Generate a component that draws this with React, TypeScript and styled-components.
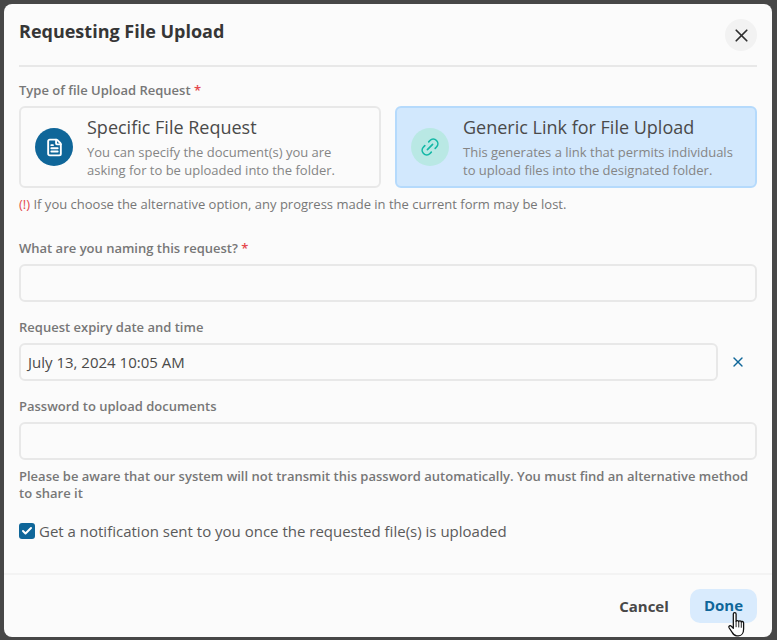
import React from 'react';
import styled, { createGlobalStyle } from 'styled-components';
import { FileText, Link2, X, Check } from 'lucide-react';

const GlobalStyle = createGlobalStyle`
  html, body {
    margin: 0;
    padding: 0;
    height: 640px;
    overflow: hidden;
    background: #474747;
    font-family: "Open Sans", "Liberation Sans", sans-serif;
  }
  * { box-sizing: border-box; }
`;

const Modal = styled.div`
  position: relative;
  width: 768px;
  height: 633px;
  margin: 4px 0 0 4px;
  background: #fbfbfb;
  border-radius: 8px;
  display: flex;
  flex-direction: column;
`;

const Body = styled.div`
  flex: 1;
  padding: 0 15px;
`;

const Header = styled.div`
  height: 63px;
  padding-top: 15px;
  border-bottom: 2px solid #e8e8e8;
  display: flex;
  justify-content: space-between;
  align-items: flex-start;
`;

const Title = styled.h2`
  margin: 0;
  font-size: 18px;
  line-height: 24px;
  font-weight: 700;
  color: #363636;
`;

const CloseButton = styled.button`
  width: 32px;
  height: 32px;
  border: none;
  border-radius: 50%;
  background: #f2f2f2;
  color: #2f2f2f;
  display: flex;
  align-items: center;
  justify-content: center;
  padding: 0;
`;

const Label = styled.div<{ $top: number }>`
  margin-top: ${({ $top }) => $top}px;
  font-size: 13px;
  line-height: 18px;
  font-weight: 600;
  color: #777777;
  margin-bottom: 7px;
`;

const Required = styled.span`
  color: #e5484d;
`;

const Cards = styled.div`
  display: grid;
  grid-template-columns: 362px 362px;
  gap: 14px;
`;

const Card = styled.div<{ $active?: boolean }>`
  height: 82px;
  border: 2px solid ${({ $active }) => ($active ? '#b5dafc' : '#e8e8e8')};
  background: ${({ $active }) => ($active ? '#d2e8fd' : 'transparent')};
  border-radius: 6px;
  display: flex;
  align-items: center;
  padding: 0 14px;
  gap: 14px;
`;

const IconCircle = styled.div<{ $active?: boolean }>`
  width: 38px;
  height: 38px;
  flex: none;
  border-radius: 50%;
  background: ${({ $active }) => ($active ? '#b9e8e4' : '#0f6699')};
  color: ${({ $active }) => ($active ? '#14b8a6' : '#ffffff')};
  display: flex;
  align-items: center;
  justify-content: center;
`;

const CardTitle = styled.div`
  font-size: 18px;
  line-height: 24px;
  color: #4a4a4a;
  margin-bottom: 4px;
`;

const CardText = styled.div`
  font-size: 13px;
  line-height: 18px;
  color: #858585;
`;

const Warning = styled.div`
  margin-top: 7px;
  font-size: 13px;
  line-height: 18px;
  color: #777777;
`;

const Bang = styled.span`
  color: #e5484d;
`;

const Field = styled.div<{ $width?: number }>`
  height: 38px;
  width: ${({ $width }) => ($width ? `${$width}px` : '100%')};
  border: 2px solid #e8e8e8;
  border-radius: 6px;
  padding: 0 7px;
  display: flex;
  align-items: center;
  font-size: 15px;
  color: #4a4a4a;
`;

const FieldRow = styled.div`
  display: flex;
  align-items: center;
`;

const ClearIcon = styled.div`
  margin-left: 12px;
  color: #0f6699;
  display: flex;
`;

const Note = styled.div`
  margin-top: 8px;
  font-size: 13px;
  line-height: 17px;
  font-weight: 600;
  color: #777777;
`;

const CheckRow = styled.div`
  margin-top: 19px;
  display: flex;
  align-items: center;
  gap: 4px;
  font-size: 15px;
  line-height: 20px;
  color: #5a5a5a;
`;

const CheckBox = styled.div`
  width: 16px;
  height: 16px;
  border-radius: 3px;
  background: #0f6699;
  color: #fff;
  display: flex;
  align-items: center;
  justify-content: center;
`;

const Footer = styled.div`
  height: 64px;
  border-top: 2px solid #f3f3f3;
  padding: 14px 15px 0 0;
  display: flex;
  justify-content: flex-end;
  align-items: flex-start;
`;

const CancelButton = styled.button`
  height: 34px;
  width: 68px;
  margin-right: 12px;
  border: none;
  background: transparent;
  font: 700 15px/32px "Open Sans", sans-serif;
  color: #484848;
  padding: 0;
`;

const DoneButton = styled.button`
  height: 34px;
  width: 67px;
  border: none;
  border-radius: 10px;
  background: #d9ebfd;
  font: 700 15px/32px "Open Sans", sans-serif;
  color: #0f6699;
  padding: 0 0 2px;
`;

const Cursor = styled.svg`
  position: absolute;
  left: 723px;
  top: 607px;
`;

const App: React.FC = () => {
  return (
    <>
      <GlobalStyle />
      <Modal>
        <Body>
          <Header>
            <Title>Requesting File Upload</Title>
            <CloseButton><X size={21} strokeWidth={2} /></CloseButton>
          </Header>
          <Label $top={14}>Type of file Upload Request <Required>*</Required></Label>
          <Cards>
            <Card>
              <IconCircle><FileText size={19} strokeWidth={2.4} /></IconCircle>
              <div>
                <CardTitle>Specific File Request</CardTitle>
                <CardText>You can specify the document(s) you are<br />asking for to be uploaded into the folder.</CardText>
              </div>
            </Card>
            <Card $active>
              <IconCircle $active><Link2 size={22} strokeWidth={1.8} transform="rotate(-45)" /></IconCircle>
              <div>
                <CardTitle>Generic Link for File Upload</CardTitle>
                <CardText>This generates a link that permits individuals<br />to upload files into the designated folder.</CardText>
              </div>
            </Card>
          </Cards>
          <Warning><Bang>(!)</Bang> If you choose the alternative option, any progress made in the current form may be lost.</Warning>
          <Label $top={26}>What are you naming this request? <Required>*</Required></Label>
          <Field />
          <Label $top={16}>Request expiry date and time</Label>
          <FieldRow>
            <Field $width={699}>July 13, 2024 10:05 AM</Field>
            <ClearIcon><X size={16} strokeWidth={2} /></ClearIcon>
          </FieldRow>
          <Label $top={16}>Password to upload documents</Label>
          <Field />
          <Note>Please be aware that our system will not transmit this password automatically. You must find an alternative method to share it</Note>
          <CheckRow>
            <CheckBox><Check size={12} strokeWidth={4} /></CheckBox>
            Get a notification sent to you once the requested file(s) is uploaded
          </CheckRow>
        </Body>
        <Footer>
          <CancelButton>Cancel</CancelButton>
          <DoneButton>Done</DoneButton>
        </Footer>
        <Cursor width="19" height="26" viewBox="0 0 15.500 22.500">
          <path d="M5 2.500c0-1.400 2.400-1.400 2.400 0V9c0-1 2.300-1 2.300.2 0-1 2.200-1 2.200.3 0-.9 2-.8 2 .6v5.400c0 3-1.500 6-4.500 6H8c-2 0-3-1.200-4-3L1.300 14.500c-.8-1.500 1-2.500 2-1.300L5 15V2.500z" fill="#fff" stroke="#111" strokeWidth="1.100" strokeLinejoin="round" />
          <path d="M7.400 9v5M9.700 9.200v5M11.900 9.500v5" stroke="#111" strokeWidth="0.800" fill="none" />
        </Cursor>
      </Modal>
    </>
  );
};

export default App;
